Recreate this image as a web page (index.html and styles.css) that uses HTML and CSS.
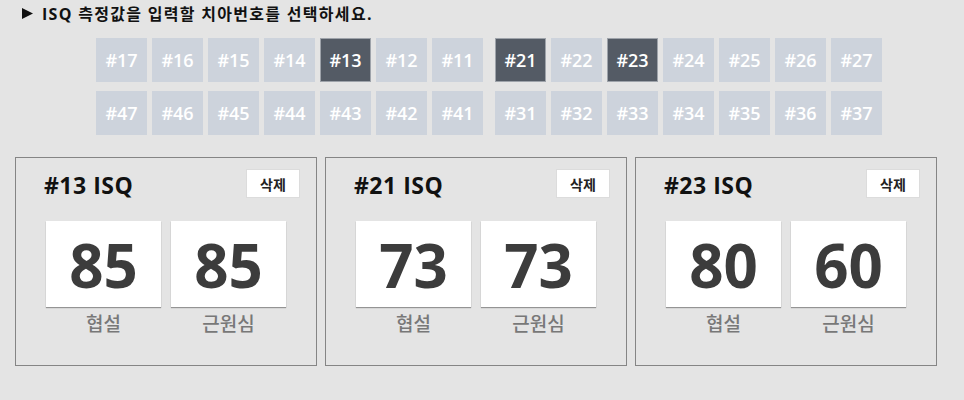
FILE: index.html
```html
<!DOCTYPE html>
<html lang="ko">
<head>
<meta charset="utf-8">
<link rel="stylesheet" href="styles.css">
</head>
<body>
<div class="page">
  <div class="heading">
    <svg class="tri" width="11" height="11" viewBox="0 0 11 11"><polygon points="0,0 11,5.5 0,11" fill="#111"/></svg>
    <span>ISQ 측정값을 입력할 치아번호를 선택하세요.</span>
  </div>
  <div class="teeth">
    <div class="quad">
      <div class="tooth">#17</div><div class="tooth">#16</div><div class="tooth">#15</div><div class="tooth">#14</div><div class="tooth on">#13</div><div class="tooth">#12</div><div class="tooth">#11</div>
      <div class="tooth">#47</div><div class="tooth">#46</div><div class="tooth">#45</div><div class="tooth">#44</div><div class="tooth">#43</div><div class="tooth">#42</div><div class="tooth">#41</div>
    </div>
    <div class="quad">
      <div class="tooth on">#21</div><div class="tooth">#22</div><div class="tooth on">#23</div><div class="tooth">#24</div><div class="tooth">#25</div><div class="tooth">#26</div><div class="tooth">#27</div>
      <div class="tooth">#31</div><div class="tooth">#32</div><div class="tooth">#33</div><div class="tooth">#34</div><div class="tooth">#35</div><div class="tooth">#36</div><div class="tooth">#37</div>
    </div>
  </div>
  <div class="cards">
    <div class="card">
      <div class="card-head"><div class="card-title">#13 ISQ</div><div class="del">삭제</div></div>
      <div class="vals">
        <div class="val"><div class="box">85</div><div class="lab">협설</div></div>
        <div class="val"><div class="box">85</div><div class="lab">근원심</div></div>
      </div>
    </div>
    <div class="card">
      <div class="card-head"><div class="card-title">#21 ISQ</div><div class="del">삭제</div></div>
      <div class="vals">
        <div class="val"><div class="box">73</div><div class="lab">협설</div></div>
        <div class="val"><div class="box">73</div><div class="lab">근원심</div></div>
      </div>
    </div>
    <div class="card">
      <div class="card-head"><div class="card-title">#23 ISQ</div><div class="del">삭제</div></div>
      <div class="vals">
        <div class="val"><div class="box">80</div><div class="lab">협설</div></div>
        <div class="val"><div class="box">60</div><div class="lab">근원심</div></div>
      </div>
    </div>
  </div>
</div>
</body>
</html>
```
FILE: styles.css
```css
html, body {
  margin: 0;
  padding: 0;
  background: #e4e4e4;
}
body {
  width: 964px;
  height: 400px;
  overflow: hidden;
  font-family: "Open Sans", "Noto Sans CJK KR", sans-serif;
}
.page {
  padding: 2px 0 0 0;
}
.heading {
  display: flex;
  align-items: center;
  height: 22px;
  padding-left: 22px;
  font-size: 16px;
  font-weight: 700;
  letter-spacing: 1.3px;
  color: #111;
}
.tri {
  margin-right: 9px;
}
.teeth {
  display: flex;
  gap: 12px;
  margin: 14px 0 0 96px;
}
.quad {
  display: grid;
  grid-template-columns: repeat(7, 51px);
  grid-auto-rows: 44px;
  column-gap: 5px;
  row-gap: 9px;
}
.tooth {
  box-sizing: border-box;
  background: #cdd3dc;
  border: 1px solid #cdd3dc;
  color: #fff;
  font-size: 18px;
  font-weight: 600;
  display: flex;
  align-items: center;
  justify-content: center;
}
.tooth.on {
  background: #545b65;
  border-color: #9ea3aa;
}
.cards {
  display: flex;
  gap: 8px;
  margin: 22px 0 0 15px;
}
.card {
  box-sizing: border-box;
  width: 302px;
  height: 209px;
  border: 1px solid #858585;
  padding: 11px 16px 0 28px;
}
.card-head {
  display: flex;
  justify-content: space-between;
  align-items: center;
  height: 29px;
}
.card-title {
  font-size: 23px;
  font-weight: 700;
  letter-spacing: 0.5px;
  color: #111;
  padding-top: 3px;
}
.del {
  box-sizing: border-box;
  width: 54px;
  height: 29px;
  background: #fff;
  border: 1px solid #dcdcdc;
  font-size: 14px;
  font-weight: 700;
  color: #222;
  display: flex;
  align-items: center;
  justify-content: center;
}
.vals {
  display: flex;
  gap: 10px;
  margin: 23px 0 0 2px;
}
.val {
  width: 115px;
}
.box {
  height: 86px;
  background: #fff;
  box-shadow: 0 1px 1px rgba(0,0,0,0.35);
  display: flex;
  align-items: center;
  justify-content: center;
  font-size: 60px;
  font-weight: 700;
  color: #3c3c3c;
  line-height: 1;
  padding-top: 2px;
  box-sizing: border-box;
}
.lab {
  margin-top: 4px;
  line-height: 26px;
  text-align: center;
  font-size: 19px;
  font-weight: 500;
  color: #787878;
}
```
